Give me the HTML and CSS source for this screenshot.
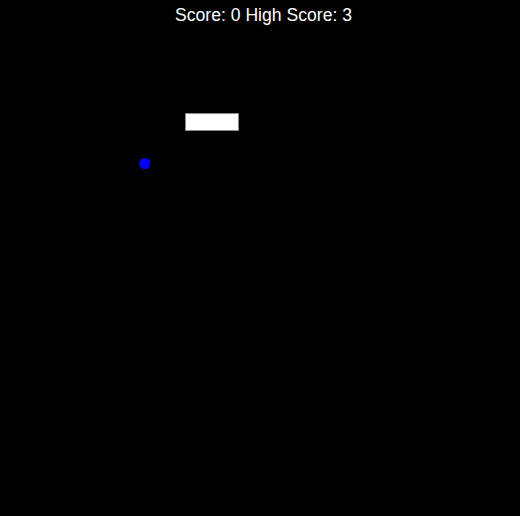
FILE: index.html
```html
<!DOCTYPE html>
<html>
<head>
<meta charset="utf-8">
<link rel="stylesheet" href="styles.css">
</head>
<body>
<div class="game">
  <div class="hud">Score: 0 High Score: 3</div>
  <div class="paddle"></div>
  <div class="ball"></div>
</div>
</body>
</html>
```
FILE: styles.css
```css
html, body {
  margin: 0;
  padding: 0;
  background: #000;
}
.game {
  position: relative;
  width: 520px;
  height: 516px;
  background: #000;
  overflow: hidden;
}
.hud {
  display: flex;
  justify-content: center;
  padding: 5px 0 0 7px;
  color: #fff;
  font-family: "Liberation Sans", Arial, sans-serif;
  font-size: 17.6px;
  line-height: 21px;
}
.paddle {
  position: absolute;
  left: 185px;
  top: 113px;
  width: 54px;
  height: 18px;
  box-sizing: border-box;
  background: #fff;
  border: 1px solid #8a8a8a;
}
.ball {
  position: absolute;
  left: 139px;
  top: 158px;
  width: 11px;
  height: 11px;
  border-radius: 50%;
  background: #0000ff;
}
```
